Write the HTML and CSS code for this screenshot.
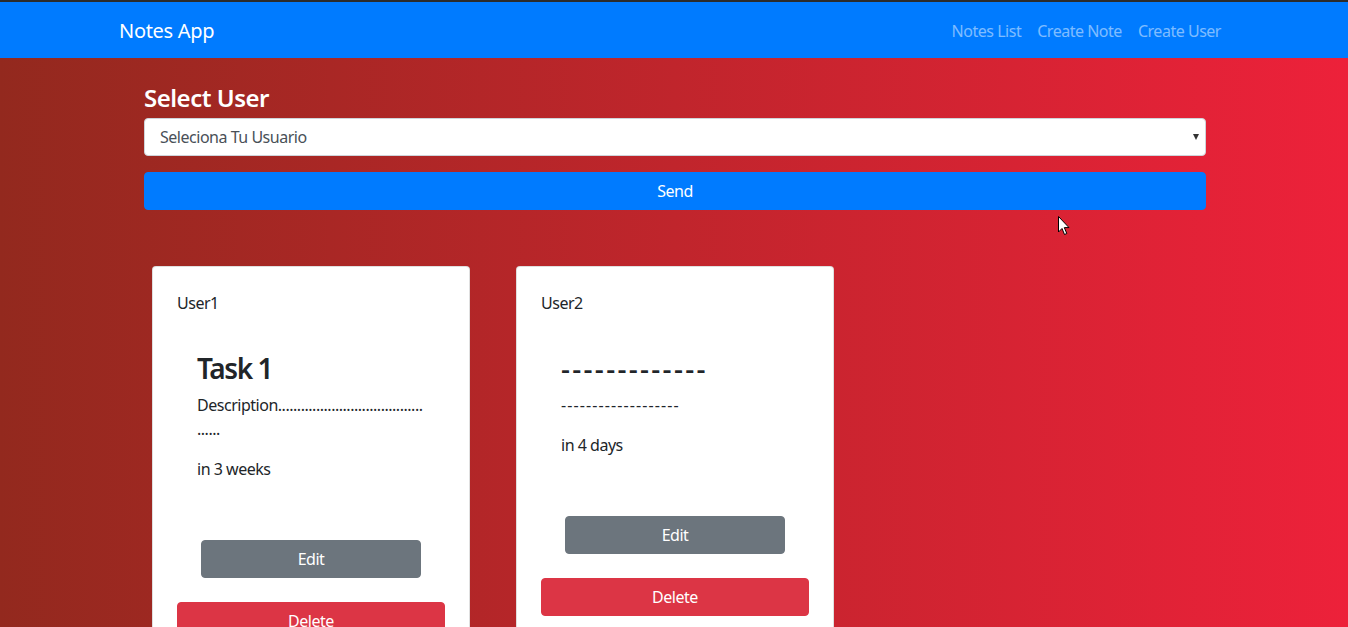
FILE: index.html
```html
<!DOCTYPE html>
<html lang="en">
<head>
<meta charset="utf-8">
<title>Notes App</title>
<link rel="stylesheet" href="styles.css">
</head>
<body>
<nav class="navbar">
  <div class="nav-inner">
    <a class="brand" href="#">Notes App</a>
    <ul class="nav-links">
      <li><a href="#">Notes List</a></li>
      <li><a href="#">Create Note</a></li>
      <li><a href="#">Create User</a></li>
    </ul>
  </div>
</nav>
<main class="page">
  <form class="user-form">
    <h4 class="form-title">Select User</h4>
    <div class="select-wrap">
      <select class="user-select">
        <option>Seleciona Tu Usuario</option>
        <option>User1</option>
        <option>User2</option>
      </select>
    </div>
    <button type="button" class="btn btn-primary btn-block">Send</button>
  </form>
  <div class="notes-grid">
    <div class="card">
      <div class="card-user">User1</div>
      <div class="note-body">
        <h3 class="note-title">Task 1</h3>
        <p class="note-desc">Description............................................</p>
        <p class="note-date">in 3 weeks</p>
      </div>
      <button type="button" class="btn btn-secondary btn-edit">Edit</button>
      <button type="button" class="btn btn-danger btn-block btn-delete">Delete</button>
    </div>
    <div class="card">
      <div class="card-user">User2</div>
      <div class="note-body">
        <h3 class="note-title title-dashes">-------------</h3>
        <p class="note-desc desc-dashes">-------------------</p>
        <p class="note-date">in 4 days</p>
      </div>
      <button type="button" class="btn btn-secondary btn-edit">Edit</button>
      <button type="button" class="btn btn-danger btn-block btn-delete">Delete</button>
    </div>
  </div>
</main>
<svg class="cursor" width="12" height="20" viewBox="0 0 12 20" aria-hidden="true">
  <path d="M0.5 0.5 L0.5 16 L4 12.5 L6.5 18.5 L8.8 17.5 L6.3 11.6 L11 11.6 Z" fill="#fff" stroke="#000" stroke-width="1"/>
</svg>
</body>
</html>
```

FILE: styles.css
```css
* { box-sizing: border-box; }

html, body { margin: 0; }

body {
  font-family: "Noto Sans", "Open Sans", "Liberation Sans", sans-serif;
  font-size: 16px;
  line-height: 1.5;
  letter-spacing: -0.03em;
  color: #212529;
  min-height: 100vh;
  background: linear-gradient(to right, #93291e, #ed213a);
  border-top: 2px solid #2b2b2b;
}

.navbar {
  background: #007bff;
  padding: 9px 0 7px;
}

.nav-inner {
  max-width: 1140px;
  margin: 0 auto;
  padding: 0 15px;
  display: flex;
  align-items: center;
  justify-content: space-between;
}

.brand {
  color: #fff;
  font-size: 20px;
  line-height: 30px;
  padding: 5px 0;
  margin-right: 16px;
  text-decoration: none;
  letter-spacing: -0.015em;
}

.nav-links {
  display: flex;
  list-style: none;
  margin: 0;
  padding: 0;
}

.nav-links a {
  display: block;
  padding: 8px 8px;
  color: rgba(255, 255, 255, 0.5);
  text-decoration: none;
}

.page {
  max-width: 1140px;
  margin: 0 auto;
  padding: 26px 38px 24px 40px;
}

.form-title {
  margin: 0 0 5px;
  font-size: 24px;
  line-height: 1.2;
  font-weight: 600;
  color: #fff;
}

.select-wrap {
  position: relative;
  margin-bottom: 16px;
}

.select-wrap::after {
  content: "";
  position: absolute;
  right: 7px;
  top: 16px;
  border-left: 3.5px solid transparent;
  border-right: 3.5px solid transparent;
  border-top: 6px solid #333;
  pointer-events: none;
}

.user-select {
  display: block;
  width: 100%;
  height: 38px;
  padding: 6px 12px 6px 15px;
  font-family: inherit;
  font-size: 16px;
  line-height: 1.5;
  letter-spacing: -0.03em;
  color: #495057;
  background: #fff;
  border: 1px solid #ced4da;
  border-radius: 4px;
  appearance: none;
  -webkit-appearance: none;
}

.btn {
  display: inline-block;
  font-family: inherit;
  font-size: 16px;
  line-height: 24px;
  letter-spacing: -0.03em;
  padding: 6px 12px;
  border: 1px solid transparent;
  border-radius: 4px;
  color: #fff;
  text-align: center;
  cursor: pointer;
}

.btn-block { display: block; width: 100%; }

.btn-primary { background: #007bff; border-color: #007bff; }
.btn-secondary { background: #6c757d; border-color: #6c757d; }
.btn-danger { background: #dc3545; border-color: #dc3545; }

.notes-grid {
  display: grid;
  grid-template-columns: repeat(3, 1fr);
  column-gap: 30px;
  margin-top: 48px;
  align-items: start;
}

.card {
  margin: 8px;
  background: #fff;
  border: 1px solid rgba(0, 0, 0, 0.125);
  border-radius: 4px;
  padding: 24px;
  display: flex;
  flex-direction: column;
}

.card-user {
  line-height: 24px;
}

.note-body {
  padding: 0 20px;
  margin-top: 37px;
}

.note-title {
  margin: 0 0 8px;
  font-size: 28px;
  line-height: 1.2;
  font-weight: 600;
  letter-spacing: -0.05em;
}

.note-desc {
  margin: 0 0 16px;
  overflow-wrap: anywhere;
}

.note-date {
  margin: 0 0 16px;
}

.title-dashes {
  font-weight: 500;
  letter-spacing: 2.3px;
}

.desc-dashes {
  letter-spacing: 1.1px;
}

.btn-edit {
  align-self: center;
  width: 220px;
  margin-top: 43px;
}

.btn-delete {
  margin-top: 24px;
}

.cursor {
  position: absolute;
  left: 1058px;
  top: 216px;
}
```
